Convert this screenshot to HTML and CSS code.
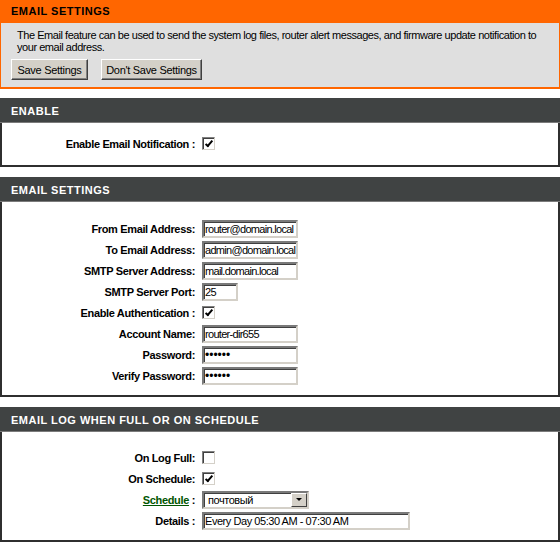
FILE: index.html
```html
<!DOCTYPE html>
<html lang="en">
<head>
    <meta charset="UTF-8">
    <title>Email Settings</title>
    <link rel="stylesheet" href="styles.css">
</head>
<body>
    <!-- Intro box -->
    <div class="intro">
        <h1>EMAIL SETTINGS</h1>
        <div class="intro-body">
            <p>The Email feature can be used to send the system log files, router alert messages, and firmware update notification to your email address.</p>
            <div class="actions">
                <button type="button" class="save">Save Settings</button>
                <button type="button" class="nosave">Don't Save Settings</button>
            </div>
        </div>
    </div>

    <div class="box">
        <h2>ENABLE</h2>
        <table class="form enable">
            <tr>
                <td class="label">Enable Email Notification :</td>
                <td><span class="check on"></span></td>
            </tr>
        </table>
    </div>

    <div class="box">
        <h2>EMAIL SETTINGS</h2>
        <table class="form settings">
            <tr><td class="label">From Email Address:</td><td><input type="text" value="router@domain.local"></td></tr>
            <tr><td class="label">To Email Address:</td><td><input type="text" value="admin@domain.local"></td></tr>
            <tr><td class="label">SMTP Server Address:</td><td><input type="text" value="mail.domain.local"></td></tr>
            <tr><td class="label">SMTP Server Port:</td><td><input type="text" class="short" value="25"></td></tr>
            <tr><td class="label">Enable Authentication :</td><td><span class="check on"></span></td></tr>
            <tr><td class="label">Account Name:</td><td><input type="text" value="router-dir655"></td></tr>
            <tr><td class="label">Password:</td><td><input type="password" value="secret"></td></tr>
            <tr><td class="label">Verify Password:</td><td><input type="password" value="secret"></td></tr>
        </table>
    </div>

    <div class="box">
        <h2>EMAIL LOG WHEN FULL OR ON SCHEDULE</h2>
        <table class="form schedule">
            <tr><td class="label">On Log Full:</td><td><span class="check"></span></td></tr>
            <tr><td class="label">On Schedule:</td><td><span class="check on"></span></td></tr>
            <tr>
                <td class="label"><a href="#">Schedule</a> :</td>
                <td>
                    <div class="select">
                        <span>почтовый</span>
                        <span class="arrow"></span>
                    </div>
                </td>
            </tr>
            <tr><td class="label">Details :</td><td><input type="text" class="long" value="Every Day 05:30 AM - 07:30 AM"></td></tr>
        </table>
    </div>
</body>
</html>
```

FILE: styles.css
```css
/* Global */
body {
    margin: 0;
    font-family: 'Liberation Sans', Arial, sans-serif;
    font-size: 11px;
    letter-spacing: -0.45px;
    color: #000;
    background: #fff;
}

/* Orange intro box */
.intro {
    background: #dfdfdf;
    border: 1px solid #ff6600;
    border-top: none;
    border-bottom-width: 2px;
}

.intro h1 {
    margin: 0 -1px;
    background: #ff6600;
    height: 23px;
    line-height: 23px;
    padding-left: 11px;
    font-size: 11px;
    font-weight: bold;
    letter-spacing: 0.5px;
    color: #000;
}

.intro-body {
    padding: 6px 8px 7px 16px;
}

.intro p {
    margin: 0;
    line-height: 12px;
}

.actions {
    display: flex;
    gap: 13px;
    margin-top: 6px;
    margin-left: -6px;
}

button {
    font-family: inherit;
    font-size: 11px;
    letter-spacing: -0.3px;
    height: 21px;
    padding: 0;
    background: #d4d0c8;
    color: #000;
    border: 1px solid;
    border-color: #fff #404040 #404040 #fff;
    box-shadow: inset -1px -1px 0 #808080;
}

button.save {
    width: 77px;
}

button.nosave {
    width: 101px;
}

/* Dark sections */
.box {
    margin-top: 10px;
    border: 2px solid #2f2f2f;
    border-top: none;
}

.intro + .box {
    margin-top: 9px;
}

.box h2 {
    margin: 0 -2px;
    background: #404343;
    border-bottom: 1px solid #7b7b7b;
    height: 24px;
    line-height: 26px;
    padding-left: 11px;
    font-size: 11px;
    font-weight: bold;
    letter-spacing: 0.5px;
    color: #fff;
}

/* Form tables */
.form {
    border-collapse: collapse;
    margin: 0;
}

.form td {
    padding: 0;
    height: 21px;
    vertical-align: middle;
}

.form .label {
    width: 193px;
    text-align: right;
    padding-right: 7px;
    font-weight: bold;
    letter-spacing: -0.35px;
}

.enable {
    margin: 10px 0 11px;
}

.settings {
    margin: 16px 0 9px;
}

.schedule {
    margin: 15px 0 9px;
}

.label a {
    color: #005500;
    text-decoration: underline;
}

/* Classic sunken controls */
input {
    box-sizing: border-box;
    width: 96px;
    height: 18px;
    padding: 0 0 0 1px;
    font-family: inherit;
    font-size: 11px;
    letter-spacing: -0.7px;
    color: #000;
    background: #fff;
    border: 2px solid;
    border-color: #7a7a7a #d4d0c8 #d4d0c8 #7a7a7a;
    box-shadow: inset 1px 1px 0 #404040;
    outline: none;
    vertical-align: middle;
}

input.short {
    width: 36px;
}

input.long {
    width: 208px;
    letter-spacing: -0.45px;
}

input[type="password"] {
    font-size: 12px;
    letter-spacing: 0;
}

.check {
    display: inline-block;
    box-sizing: border-box;
    width: 13px;
    height: 13px;
    border: 1px solid;
    border-color: #808080 #d4d0c8 #d4d0c8 #808080;
    box-shadow: inset 1px 1px 0 #404040;
    background: #fff;
    position: relative;
    vertical-align: middle;
}

.check.on::after {
    content: "";
    position: absolute;
    left: 4px;
    top: 1px;
    width: 2px;
    height: 6px;
    border: solid #000;
    border-width: 0 2px 2px 0;
    transform: rotate(40deg);
}

.select {
    box-sizing: border-box;
    display: flex;
    align-items: center;
    justify-content: space-between;
    width: 107px;
    height: 18px;
    padding-left: 4px;
    background: #fff;
    border: 2px solid;
    border-color: #7a7a7a #d4d0c8 #d4d0c8 #7a7a7a;
    box-shadow: inset 1px 1px 0 #404040;
}

.select .arrow {
    box-sizing: border-box;
    width: 16px;
    height: 14px;
    background: #d4d0c8;
    border: 1px solid;
    border-color: #fff #404040 #404040 #fff;
    position: relative;
}

.select .arrow::after {
    content: "";
    position: absolute;
    left: 4px;
    top: 4px;
    border: 3px solid transparent;
    border-top: 3px solid #000;
    border-bottom: none;
}
```
